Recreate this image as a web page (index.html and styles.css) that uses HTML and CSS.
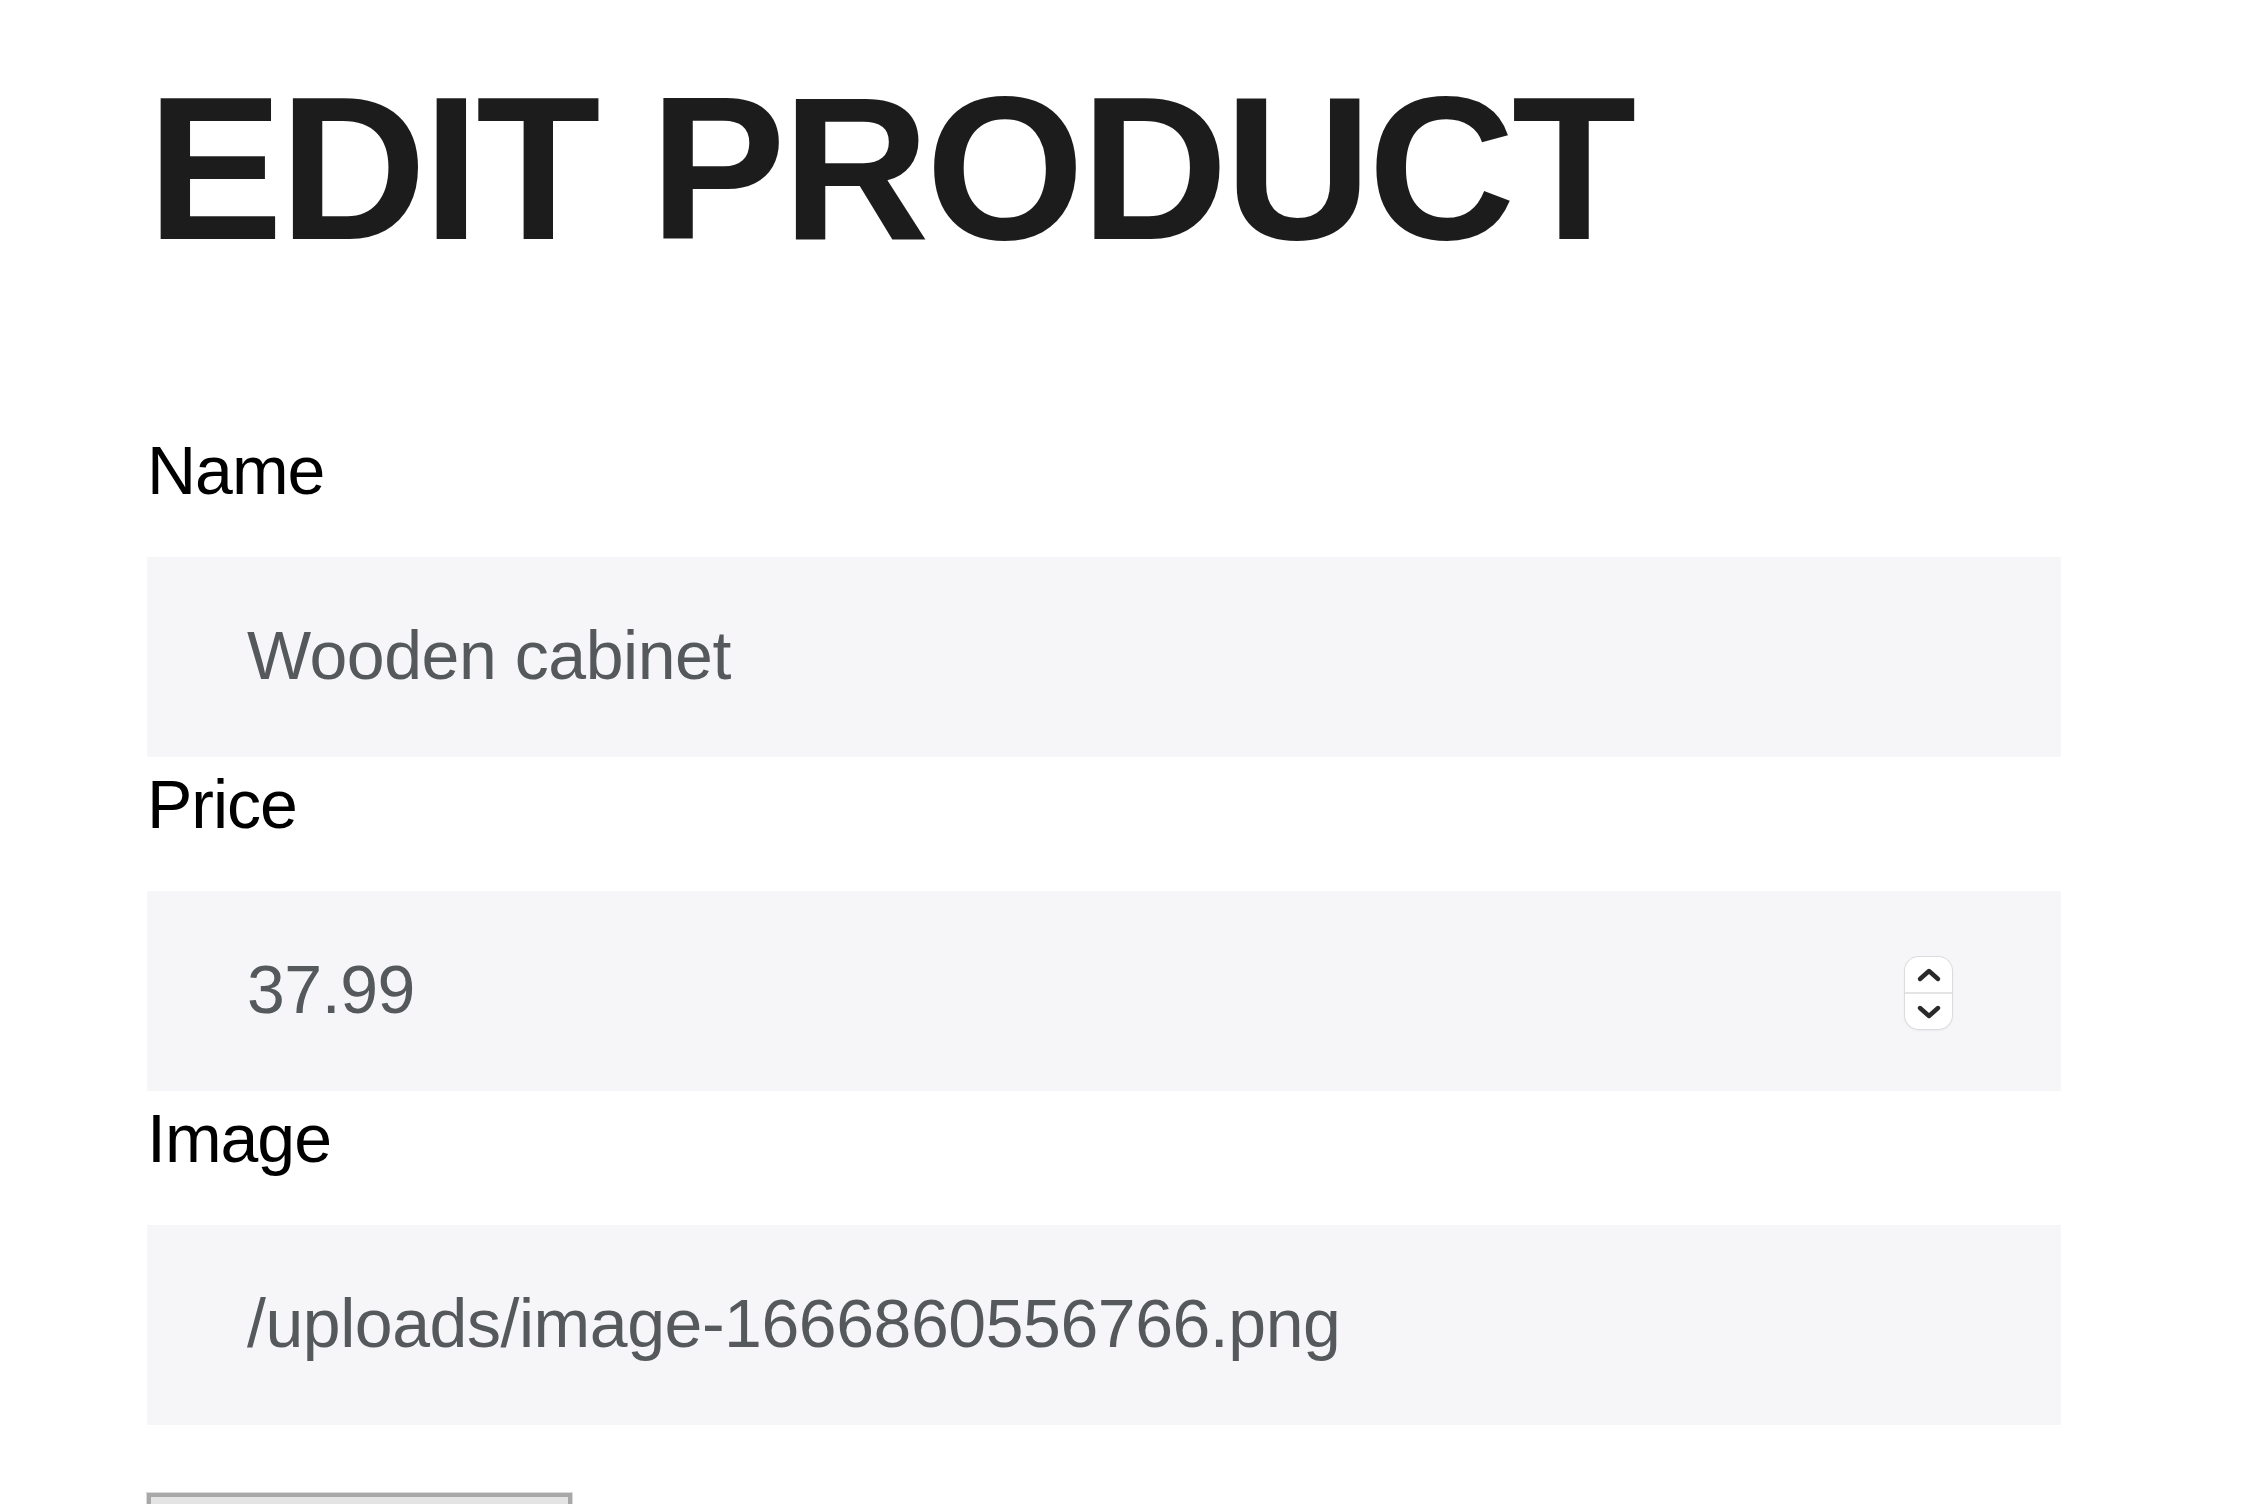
FILE: index.html
```html
<!DOCTYPE html>
<html lang="en">
<head>
<meta charset="utf-8">
<title>Edit Product</title>
<link rel="stylesheet" href="styles.css">
</head>
<body>
<main class="page">
  <h1 class="title">EDIT PRODUCT</h1>
  <form class="form">
    <label class="label" for="name">Name</label>
    <div class="field">
      <input class="input" id="name" type="text" value="Wooden cabinet">
    </div>
    <label class="label" for="price">Price</label>
    <div class="field field-number">
      <input class="input" id="price" type="number" value="37.99" step="0.01">
      <div class="spinner" aria-hidden="true">
        <span class="spin-btn">
          <svg width="26" height="16" viewBox="0 0 26 16"><path d="M4 12 L13 4 L22 12" fill="none" stroke="#2a2a2a" stroke-width="4.4" stroke-linecap="round" stroke-linejoin="round"/></svg>
        </span>
        <span class="spin-sep"></span>
        <span class="spin-btn">
          <svg width="26" height="16" viewBox="0 0 26 16"><path d="M4 4 L13 12 L22 4" fill="none" stroke="#2a2a2a" stroke-width="4.4" stroke-linecap="round" stroke-linejoin="round"/></svg>
        </span>
      </div>
    </div>
    <label class="label" for="image">Image</label>
    <div class="field">
      <input class="input" id="image" type="text" value="/uploads/image-1666860556766.png">
    </div>
    <button class="submit" type="submit" aria-label="Update"></button>
  </form>
</main>
</body>
</html>
```

FILE: styles.css
```css
html {
  overflow: hidden;
}

body {
  margin: 0;
  background: #ffffff;
  font-family: "Liberation Sans", Arial, Helvetica, sans-serif;
}

.page {
  padding: 66px 197px 0 147px;
}

.title {
  margin: 0;
  font-size: 204px;
  line-height: 204px;
  font-weight: 700;
  letter-spacing: -3.7px;
  color: #1c1c1c;
}

.form {
  display: flex;
  flex-direction: column;
  align-items: stretch;
  margin-top: 166px;
}

.label {
  display: block;
  font-size: 68px;
  line-height: 68px;
  letter-spacing: -1px;
  color: #000000;
  margin-bottom: 53px;
}

.field {
  display: flex;
  align-items: center;
  height: 200px;
  background: #f6f6f8;
  margin-bottom: 13px;
}

.input {
  flex: 1;
  min-width: 0;
  height: 100%;
  box-sizing: border-box;
  border: none;
  outline: none;
  background: transparent;
  padding: 0 0 5px 100px;
  margin: 0;
  font-family: "Liberation Sans", Arial, Helvetica, sans-serif;
  font-size: 68px;
  letter-spacing: -0.45px;
  color: #55595c;
  -moz-appearance: textfield;
}

.input::-webkit-inner-spin-button,
.input::-webkit-outer-spin-button {
  -webkit-appearance: none;
  margin: 0;
}

.field-number {
  padding-right: 109px;
}

.spinner {
  display: flex;
  flex-direction: column;
  width: 47px;
  height: 72px;
  margin-top: 4px;
  box-sizing: border-box;
  background: #ffffff;
  border-radius: 14px;
  box-shadow: 0 0 0 1px #dcdcde, 0 1px 3px rgba(0, 0, 0, 0.10);
  overflow: hidden;
}

.spin-btn {
  flex: 1;
  display: flex;
  align-items: center;
  justify-content: center;
}

.spin-sep {
  height: 2px;
  background: #e4e4e6;
}

.submit {
  align-self: flex-start;
  margin-top: 55px;
  width: 425px;
  height: 90px;
  box-sizing: border-box;
  background: #e4e4e4;
  border: 4px solid #a8a8a8;
  box-shadow: 0 0 0 1px #dadada;
  padding: 0;
}
```
